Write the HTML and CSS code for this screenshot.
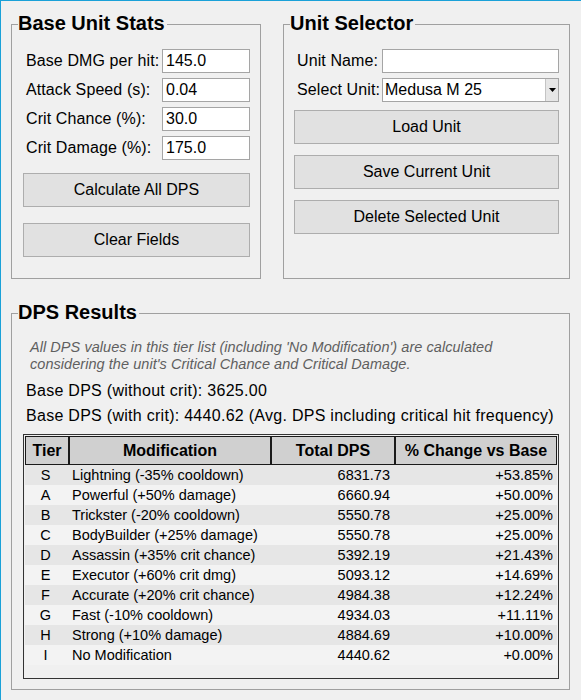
FILE: index.html
```html
<!DOCTYPE html>
<html lang="en">
<head>
<meta charset="utf-8">
<title>DPS Calculator</title>
<link rel="stylesheet" href="styles.css">
</head>
<body>
<div class="window">
  <div class="top-row">
    <fieldset class="group group-stats">
      <legend class="group-title">Base Unit Stats</legend>
      <div class="group-body">
        <div class="form">
          <label class="form-label">Base DMG per hit:</label>
          <input class="field" type="text" value="145.0">
          <label class="form-label">Attack Speed (s):</label>
          <input class="field" type="text" value="0.04">
          <label class="form-label">Crit Chance (%):</label>
          <input class="field" type="text" value="30.0">
          <label class="form-label">Crit Damage (%):</label>
          <input class="field" type="text" value="175.0">
        </div>
        <div class="buttons buttons-stats">
          <button class="btn" type="button">Calculate All DPS</button>
          <button class="btn" type="button">Clear Fields</button>
        </div>
      </div>
    </fieldset>
    <fieldset class="group group-selector">
      <legend class="group-title">Unit Selector</legend>
      <div class="group-body">
        <div class="form form-selector">
          <label class="form-label">Unit Name:</label>
          <input class="field" type="text" value="">
          <label class="form-label">Select Unit:</label>
          <div class="combo">
            <span class="combo-text">Medusa M 25</span>
            <span class="combo-btn"><svg width="7" height="4" viewBox="0 0 7 4"><path d="M0 0H7L3.5 4Z" fill="#000"/></svg></span>
          </div>
        </div>
        <div class="buttons buttons-selector">
          <button class="btn" type="button">Load Unit</button>
          <button class="btn" type="button">Save Current Unit</button>
          <button class="btn" type="button">Delete Selected Unit</button>
        </div>
      </div>
    </fieldset>
  </div>
  <fieldset class="group group-results">
    <legend class="group-title">DPS Results</legend>
    <div class="group-body results-body">
      <p class="note">All DPS values in this tier list (including 'No Modification') are calculated considering the unit's Critical Chance and Critical Damage.</p>
      <p class="base-line base-first">Base DPS (without crit): 3625.00</p>
      <p class="base-line">Base DPS (with crit): 4440.62 (Avg. DPS including critical hit frequency)</p>
      <div class="tree">
        <table class="tier-table">
          <colgroup>
            <col class="col-tier">
            <col class="col-mod">
            <col class="col-total">
            <col class="col-change">
          </colgroup>
          <thead>
            <tr><th>Tier</th><th>Modification</th><th>Total DPS</th><th>% Change vs Base</th></tr>
          </thead>
          <tbody>
            <tr><td class="c-tier">S</td><td class="c-mod">Lightning (-35% cooldown)</td><td class="c-num">6831.73</td><td class="c-pct">+53.85%</td></tr>
            <tr><td class="c-tier">A</td><td class="c-mod">Powerful (+50% damage)</td><td class="c-num">6660.94</td><td class="c-pct">+50.00%</td></tr>
            <tr><td class="c-tier">B</td><td class="c-mod">Trickster (-20% cooldown)</td><td class="c-num">5550.78</td><td class="c-pct">+25.00%</td></tr>
            <tr><td class="c-tier">C</td><td class="c-mod">BodyBuilder (+25% damage)</td><td class="c-num">5550.78</td><td class="c-pct">+25.00%</td></tr>
            <tr><td class="c-tier">D</td><td class="c-mod">Assassin (+35% crit chance)</td><td class="c-num">5392.19</td><td class="c-pct">+21.43%</td></tr>
            <tr><td class="c-tier">E</td><td class="c-mod">Executor (+60% crit dmg)</td><td class="c-num">5093.12</td><td class="c-pct">+14.69%</td></tr>
            <tr><td class="c-tier">F</td><td class="c-mod">Accurate (+20% crit chance)</td><td class="c-num">4984.38</td><td class="c-pct">+12.24%</td></tr>
            <tr><td class="c-tier">G</td><td class="c-mod">Fast (-10% cooldown)</td><td class="c-num">4934.03</td><td class="c-pct">+11.11%</td></tr>
            <tr><td class="c-tier">H</td><td class="c-mod">Strong (+10% damage)</td><td class="c-num">4884.69</td><td class="c-pct">+10.00%</td></tr>
            <tr><td class="c-tier">I</td><td class="c-mod">No Modification</td><td class="c-num">4440.62</td><td class="c-pct">+0.00%</td></tr>
          </tbody>
        </table>
      </div>
    </div>
  </fieldset>
</div>
</body>
</html>
```
FILE: styles.css
```css
* { box-sizing: border-box; }

html, body {
  margin: 0;
  padding: 0;
  background: #f0f0f0;
}

body {
  font-family: "Liberation Sans", Arial, sans-serif;
  font-size: 16px;
  color: #000;
}

.window {
  width: 581px;
  height: 700px;
  border-top: 1px solid #1aa1d8;
  border-left: 1px solid #1aa1d8;
  padding: 12px 0 0 10px;
  overflow: hidden;
}

.top-row {
  display: flex;
  gap: 22px;
}

.group {
  margin: 0;
  padding: 0;
  border: 1px solid #a0a0a0;
  min-width: 0;
}

.group-title {
  font-weight: bold;
  font-size: 20px;
  line-height: 21px;
  padding: 0 2px 2px 0;
  margin-left: 6px;
}

.group-stats {
  width: 250px;
  height: 266px;
}

.group-selector {
  width: 287px;
  height: 266px;
}

.group-stats .group-body {
  padding: 13px 10px 0 11px;
}

.group-selector .group-body {
  padding: 13px 10px 0 10px;
}

.form {
  display: grid;
  grid-template-columns: 136px 88px;
  row-gap: 5px;
  align-items: center;
  padding-left: 3px;
}

.form-selector {
  grid-template-columns: 85px 177px;
}

.form-label {
  font-size: 16px;
  letter-spacing: 0.1px;
  white-space: nowrap;
}

.field {
  height: 24px;
  width: 100%;
  margin: 0;
  border: 1px solid #a5a5a5;
  background: #fff;
  padding: 0 3px;
  font-family: "Liberation Sans", Arial, sans-serif;
  font-size: 16px;
  color: #000;
  outline: none;
}

.combo {
  display: flex;
  height: 24px;
  border: 1px solid #a5a5a5;
  background: #fff;
}

.combo-text {
  flex: 1;
  padding-left: 2px;
  line-height: 22px;
  font-size: 16px;
}

.combo-btn {
  width: 13px;
  background: #e6e6e6;
  border-left: 1px solid #c4c4c4;
  display: flex;
  align-items: center;
  justify-content: center;
}

.combo-btn svg {
  display: block;
}

.buttons {
  display: flex;
  flex-direction: column;
}

.buttons-stats {
  margin-top: 13px;
  gap: 16px;
}

.buttons-selector {
  margin-top: 8px;
  gap: 11px;
}

.btn {
  height: 34px;
  margin: 0;
  padding: 0;
  background: #e1e1e1;
  border: 1px solid #adadad;
  font-family: "Liberation Sans", Arial, sans-serif;
  font-size: 16px;
  color: #000;
}

.group-results {
  margin-top: 23px;
  width: 559px;
  height: 388px;
}

.results-body {
  padding: 14px 10px 0 11px;
}

.note {
  margin: 0;
  padding-left: 7px;
  font-style: italic;
  font-size: 14.5px;
  line-height: 17px;
  letter-spacing: 0.05px;
  color: #5f5f5f;
}

.base-line {
  margin: 7px 0 0 0;
  padding-left: 3px;
  font-size: 16px;
  line-height: 18px;
  letter-spacing: 0.28px;
  white-space: nowrap;
}

.base-first {
  margin-top: 9px;
}

.tree {
  margin-top: 9px;
  height: 245px;
  border: 1px solid #333;
  padding: 1px;
  background: #f0f0f0;
}

.tier-table {
  width: 100%;
  table-layout: fixed;
  border-collapse: separate;
  border-spacing: 0;
}

.col-tier { width: 44px; }
.col-mod { width: 202px; }
.col-total { width: 124px; }
.col-change { width: 162px; }

.tier-table th {
  height: 29px;
  padding: 0;
  background: #d0d0d0;
  border: 1px solid #1a1a1a;
  font-weight: bold;
  font-size: 16px;
  text-align: center;
  white-space: nowrap;
}

.tier-table td {
  height: 20px;
  padding: 0;
  font-size: 14.5px;
  line-height: 20px;
  white-space: nowrap;
}

.tier-table tbody tr:nth-child(odd) { background: #e6e6e6; }
.tier-table tbody tr:nth-child(even) { background: #f3f3f3; }

.c-tier { text-align: center; padding-right: 3px !important; }
.c-mod { padding-left: 3px !important; }
.c-num { text-align: right; padding-right: 5px !important; }
.c-pct { text-align: right; padding-right: 4px !important; }
```
